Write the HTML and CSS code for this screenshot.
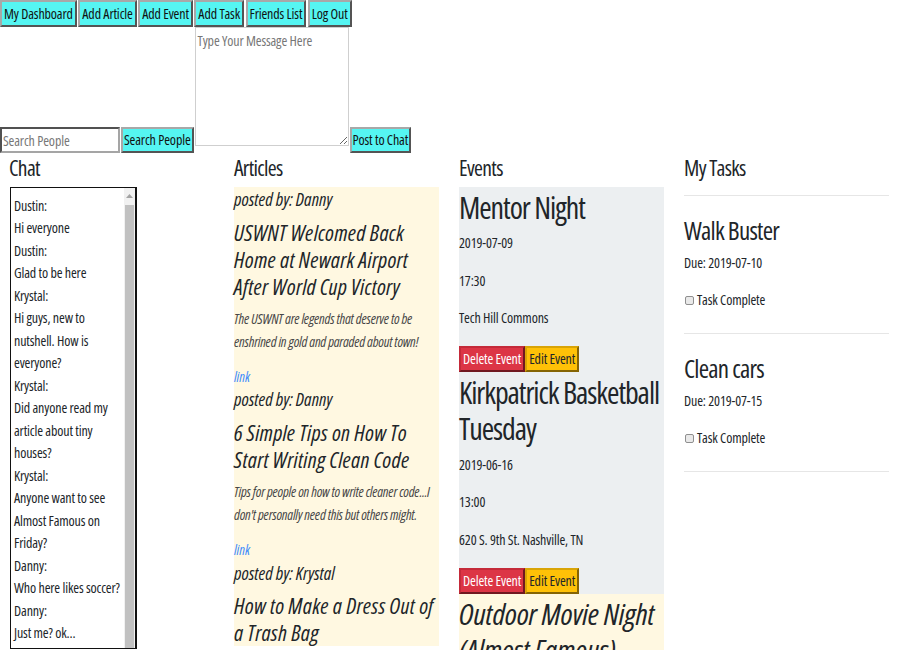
FILE: index.html
```html
<!DOCTYPE html>
<html lang="en">
<head>
<meta charset="utf-8">
<title>Nutshell Dashboard</title>
<link rel="stylesheet" href="styles.css">
</head>
<body>
<nav class="nav">
  <button class="btn-cyan">My Dashboard</button>
  <button class="btn-cyan">Add Article</button>
  <button class="btn-cyan">Add Event</button>
  <button class="btn-cyan">Add Task</button>
  <button class="btn-cyan">Friends List</button>
  <button class="btn-cyan">Log Out</button>
</nav>
<div class="compose">
  <input class="search" type="text" placeholder="Search People">
  <button class="btn-cyan btn-row">Search People</button>
  <textarea class="message" placeholder="Type Your Message Here"></textarea>
  <button class="btn-cyan btn-row">Post to Chat</button>
</div>
<main class="board">
  <section class="col">
    <h4 class="col-title">Chat</h4>
    <div class="chat">
      <div class="chat-messages">
        <p>Dustin:</p>
        <p>Hi everyone</p>
        <p>Dustin:</p>
        <p>Glad to be here</p>
        <p>Krystal:</p>
        <p>Hi guys, new to nutshell. How is everyone?</p>
        <p>Krystal:</p>
        <p>Did anyone read my article about tiny houses?</p>
        <p>Krystal:</p>
        <p>Anyone want to see Almost Famous on Friday?</p>
        <p>Danny:</p>
        <p>Who here likes soccer?</p>
        <p>Danny:</p>
        <p>Just me? ok...</p>
      </div>
      <div class="chat-scrollbar" aria-hidden="true">
        <div class="scroll-arrow">
          <svg width="7" height="4" viewBox="0 0 7 4"><path d="M0 4 L3.5 0 L7 4 Z" fill="#a3a3a3"/></svg>
        </div>
        <div class="scroll-thumb"></div>
      </div>
    </div>
  </section>
  <section class="col">
    <h4 class="col-title">Articles</h4>
    <div class="articles">
      <article class="article">
        <h5 class="posted">posted by: Danny</h5>
        <h4 class="article-title">USWNT Welcomed Back Home at Newark Airport After World Cup Victory</h4>
        <p class="article-desc">The USWNT are legends that deserve to be enshrined in gold and paraded about town!</p>
        <a class="article-link" href="#">link</a>
      </article>
      <article class="article">
        <h5 class="posted">posted by: Danny</h5>
        <h4 class="article-title">6 Simple Tips on How To Start Writing Clean Code</h4>
        <p class="article-desc">Tips for people on how to write cleaner code...I don't personally need this but others might.</p>
        <a class="article-link" href="#">link</a>
      </article>
      <article class="article">
        <h5 class="posted">posted by: Krystal</h5>
        <h4 class="article-title">How to Make a Dress Out of a Trash Bag</h4>
      </article>
    </div>
  </section>
  <section class="col">
    <h4 class="col-title">Events</h4>
    <div class="event">
      <h1 class="event-title">Mentor Night</h1>
      <p>2019-07-09</p>
      <p>17:30</p>
      <p>Tech Hill Commons</p>
      <div class="event-actions">
        <button class="btn-delete">Delete Event</button><button class="btn-edit">Edit Event</button>
      </div>
    </div>
    <div class="event">
      <h1 class="event-title">Kirkpatrick Basketball Tuesday</h1>
      <p>2019-06-16</p>
      <p>13:00</p>
      <p>620 S. 9th St. Nashville, TN</p>
      <div class="event-actions">
        <button class="btn-delete">Delete Event</button><button class="btn-edit">Edit Event</button>
      </div>
    </div>
    <div class="event event-friend">
      <h1 class="event-title">Outdoor Movie Night (Almost Famous)</h1>
    </div>
  </section>
  <section class="col">
    <h4 class="col-title">My Tasks</h4>
    <div class="tasks">
      <div class="task">
        <h3 class="task-title">Walk Buster</h3>
        <p class="task-due">Due: 2019-07-10</p>
        <label class="task-check"><input type="checkbox" class="checkbox"> Task Complete</label>
      </div>
      <div class="task">
        <h3 class="task-title">Clean cars</h3>
        <p class="task-due">Due: 2019-07-15</p>
        <label class="task-check"><input type="checkbox" class="checkbox"> Task Complete</label>
      </div>
    </div>
  </section>
</main>
</body>
</html>
```
FILE: styles.css
```css
html {
  overflow: hidden;
}
body {
  margin: 0;
  font-family: "Open Sans", "Noto Sans", sans-serif;
  font-stretch: 75%;
  font-size: 14px;
  line-height: 22.5px;
  letter-spacing: -0.01em;
  color: #212529;
  background: #fff;
}

/* top navigation */
.nav {
  display: flex;
  gap: 1.5px;
  align-items: flex-start;
}
.btn-cyan {
  font: inherit;
  line-height: 21px;
  letter-spacing: inherit;
  color: #111;
  background: #55f5f2;
  border: 2px outset #a8a8a8;
  padding: 1px 2px;
  margin: 0;
  cursor: pointer;
}
.btn-row {
  line-height: 20px;
  padding: 1px 1px;
}

/* compose row */
.compose {
  display: flex;
  align-items: flex-end;
  gap: 1px;
}
.search {
  font: inherit;
  letter-spacing: inherit;
  width: 120px;
  height: 26px;
  box-sizing: border-box;
  border: 2px inset #a5a5a5;
  padding: 1px 1px;
  margin: 0;
}
.message {
  font: inherit;
  letter-spacing: inherit;
  width: 154px;
  height: 119px;
  box-sizing: border-box;
  border: 1px solid #cfcfcf;
  padding: 2px;
  margin: 0 0 7px;
}
.search::placeholder,
.message::placeholder {
  color: #777;
}

/* board */
.board {
  display: grid;
  grid-template-columns: repeat(4, 225px);
}
.col {
  padding: 2px 11px 0 9px;
  min-width: 0;
}
.col-title {
  font-size: 21.5px;
  line-height: 26px;
  font-weight: 500;
  letter-spacing: -0.03em;
  margin: 0 0 6px;
}

/* chat */
.chat {
  display: flex;
  width: 127px;
  height: 462px;
  box-sizing: border-box;
  margin-left: 1px;
  border: 1px solid #111;
  border-right-width: 2px;
  overflow: hidden;
}
.chat-messages {
  flex: 1;
  min-width: 0;
  padding: 6.75px 0 0 3px;
}
.chat-messages p {
  margin: 0;
}
.chat-scrollbar {
  width: 11px;
  flex: none;
  display: flex;
  flex-direction: column;
  background: #f1f1f1;
}
.scroll-arrow {
  height: 15px;
  display: flex;
  align-items: center;
  justify-content: center;
}
.scroll-thumb {
  flex: 1;
  margin: 2px 1px 0;
  background: #c1c1c1;
}

/* articles */
.articles {
  background: #fff8e1;
  padding-top: 1px;
}
.article {
  padding-top: 1px;
}
.posted {
  font-size: 18px;
  line-height: 21.6px;
  font-weight: 500;
  font-style: italic;
  letter-spacing: 0;
  margin: 0 0 8px;
}
.article-title {
  font-size: 22px;
  line-height: 27px;
  font-weight: 500;
  font-style: italic;
  letter-spacing: 0.012em;
  margin: 0 0 7px;
}
.article-desc {
  font-style: italic;
  letter-spacing: -0.015em;
  color: #474747;
  line-height: 23px;
  margin: 0 0 13.25px;
}
.article-link {
  display: block;
  color: #3d8bfd;
  font-style: italic;
  letter-spacing: 0;
  text-decoration: none;
}

/* events */
.event {
  background: #eceff1;
  padding-top: 2.5px;
}
.event-friend {
  background: #fff8e1;
  font-style: italic;
}
.event-title {
  font-size: 30px;
  line-height: 36px;
  font-weight: 500;
  letter-spacing: -0.035em;
  margin: 0 0 6.75px;
}
.event-friend .event-title {
  letter-spacing: -0.005em;
}
.event p {
  margin: 0 0 15px;
}
.event-actions {
  display: flex;
  padding-top: 1.5px;
}
.btn-delete,
.btn-edit {
  font: inherit;
  letter-spacing: inherit;
  line-height: 20px;
  padding: 1px 2px;
  margin: 0;
  cursor: pointer;
}
.btn-delete {
  background: #dc3545;
  color: #fff;
  border: 2px outset #c42a39;
}
.btn-edit {
  background: #ffc107;
  color: #212529;
  border: 2px outset #d9a406;
}

/* tasks */
.tasks {
  margin-top: 14px;
  border-top: 1px solid #e6e6e6;
}
.task {
  padding: 19px 0 21.75px;
  border-bottom: 1px solid #e6e6e6;
}
.task-title {
  font-size: 25px;
  line-height: 30px;
  font-weight: 500;
  letter-spacing: -0.03em;
  margin: 0 0 6.75px;
}
.task-due {
  margin: 0 0 14.5px;
}
.task-check {
  display: flex;
  align-items: center;
  gap: 3px;
}
.checkbox {
  appearance: none;
  width: 9px;
  height: 9px;
  margin: 0 0 0 1px;
  border: 1px solid #8f8f8f;
  border-radius: 2px;
  background: #e9e9e9;
}
```
